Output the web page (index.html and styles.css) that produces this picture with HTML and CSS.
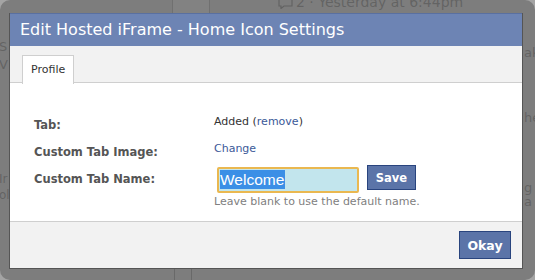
FILE: index.html
```html
<!DOCTYPE html>
<html lang="en">
<head>
    <meta charset="UTF-8">
    <meta name="viewport" content="width=device-width, initial-scale=1.0">
    <title>Edit Hosted iFrame - Home Icon Settings</title>
    <link rel="stylesheet" href="styles.css">
</head>
<body>
    <div class="backdrop">
        <!-- faded page behind the dialog -->
        <div class="behind behind-box"></div>
        <div class="behind behind-meta">
            <svg class="comment-icon" width="15" height="11" viewBox="0 0 15 11"><path d="M1 1h13v7H6l-3 2.5V8H1z" fill="none" stroke="currentColor" stroke-width="1.2"/></svg>
            <span>2 · Yesterday at 6:44pm</span>
        </div>
        <div class="behind behind-left l1">S</div>
        <div class="behind behind-left l2">V</div>
        <div class="behind behind-left l3">Ir</div>
        <div class="behind behind-left l4">ol</div>
        <div class="behind behind-right r1">ak</div>
        <div class="behind behind-right r2">he</div>
        <div class="behind behind-right r3">g a</div>
        <div class="behind behind-line"></div>

        <div class="dialog">
            <div class="dialog-title">Edit Hosted iFrame - Home Icon Settings</div>
            <div class="tabs">
                <div class="tab active">Profile</div>
            </div>
            <div class="dialog-body">
                <div class="row row-tab">
                    <div class="label">Tab:</div>
                    <div class="value">Added (<a href="#">remove</a>)</div>
                </div>
                <div class="row row-image">
                    <div class="label">Custom Tab Image:</div>
                    <div class="value"><a href="#">Change</a></div>
                </div>
                <div class="row row-name">
                    <div class="label">Custom Tab Name:</div>
                    <div class="value">
                        <div class="name-line">
                            <div class="text-input"><span class="selected">Welcome</span></div>
                            <button class="btn btn-save" type="button">Save</button>
                        </div>
                        <div class="hint">Leave blank to use the default name.</div>
                    </div>
                </div>
            </div>
            <div class="dialog-footer">
                <button class="btn btn-okay" type="button">Okay</button>
            </div>
        </div>
    </div>
</body>
</html>
```

FILE: styles.css
```css
body {
    margin: 0;
    background-color: #a4a4a4;
    font-family: "DejaVu Sans", Verdana, sans-serif;
}
.backdrop {
    position: relative;
    width: 535px;
    height: 280px;
    box-sizing: border-box;
    padding: 13px 0 0 9px;
    background-color: #7d7d7d;
    border-radius: 10px;
    overflow: hidden;
}
.behind {
    position: absolute;
    color: rgba(50,50,50,0.35);
    font-size: 13px;
    line-height: 14px;
}
.behind-box {
    left: 172px;
    top: 0;
    width: 36px;
    height: 13px;
    border-left: 1px solid rgba(60,60,60,0.25);
    border-right: 1px solid rgba(60,60,60,0.25);
    background: rgba(255,255,255,0.04);
}
.behind-meta {
    top: -5px;
    left: 278px;
    display: flex;
    align-items: center;
    gap: 3px;
    font-size: 14px;
}
.comment-icon {
    margin-top: 2px;
}
.behind-left { left: -1px; }
.behind-right { left: 524px; }
.l1 { top: 40px; }
.l2 { top: 58px; }
.l3 { top: 174px; line-height: 11px; font-size: 12px; }
.l4 { top: 190px; line-height: 11px; font-size: 12px; }
.r1 { top: 46px; }
.r2 { top: 111px; }
.r3 { top: 181px; }
.behind-line {
    left: 174px;
    top: 268px;
    width: 16px;
    height: 12px;
    border-left: 1px solid rgba(60,60,60,0.3);
    border-right: 1px solid rgba(60,60,60,0.3);
}
.dialog {
    position: relative;
    width: 514px;
    box-sizing: border-box;
    border: 1px solid #555;
    border-top: none;
    background: white;
}
.dialog-title {
    height: 33px;
    box-sizing: border-box;
    padding-left: 10px;
    background-color: #6d84b4;
    border-top: 1px solid #5a70a0;
    color: white;
    font-size: 16px;
    line-height: 32px;
}
.tabs {
    height: 37px;
    box-sizing: border-box;
    padding: 9px 0 0 12px;
    background-color: #f2f2f2;
    border-bottom: 1px solid #cfcfcf;
    display: flex;
}
.tab {
    height: 28px;
    padding: 0 8px;
    background: white;
    border: 1px solid #cfcfcf;
    border-bottom: none;
    color: #333;
    font-size: 11px;
    line-height: 28px;
}
.dialog-body {
    height: 138px;
    box-sizing: border-box;
    padding: 32px 24px 0;
    color: #333;
    font-size: 11px;
    line-height: 14px;
}
.row {
    display: flex;
    align-items: flex-start;
}
.row-image { margin-top: 10px; }
.row-name { margin-top: 8px; }
.label {
    width: 180px;
    margin-top: 3px;
    color: #555;
    font-weight: bold;
    font-size: 11.5px;
}
.row-name .label { margin-top: 5px; }
a {
    color: #3b5998;
    text-decoration: none;
}
.name-line {
    display: flex;
    align-items: flex-start;
}
.text-input {
    width: 142px;
    height: 26px;
    box-sizing: border-box;
    margin-left: 3px;
    padding: 1px 1px;
    border: 2px solid #eab850;
    border-radius: 2px;
    background-color: #c2e5ed;
    font-family: "Liberation Sans", Arial, sans-serif;
    font-size: 15.5px;
    line-height: 19px;
}
.selected {
    display: inline-block;
    padding-right: 1px;
    background-color: #3b8fe6;
    color: white;
}
.btn {
    box-sizing: border-box;
    background-color: #5b74a8;
    border: 1px solid #29447e;
    color: white;
    font-family: "DejaVu Sans", Verdana, sans-serif;
    font-weight: bold;
    padding: 0;
    cursor: pointer;
}
.btn-save {
    width: 49px;
    height: 25px;
    margin: -2px 0 0 8px;
    font-size: 11.5px;
}
.hint {
    margin-top: 2px;
    color: #808080;
}
.dialog-footer {
    height: 47px;
    box-sizing: border-box;
    padding: 9px 11px 0 0;
    background-color: #f2f2f2;
    border-top: 1px solid #cfcfcf;
    display: flex;
    justify-content: flex-end;
    align-items: flex-start;
}
.btn-okay {
    width: 52px;
    height: 28px;
    font-size: 12.5px;
}
```
